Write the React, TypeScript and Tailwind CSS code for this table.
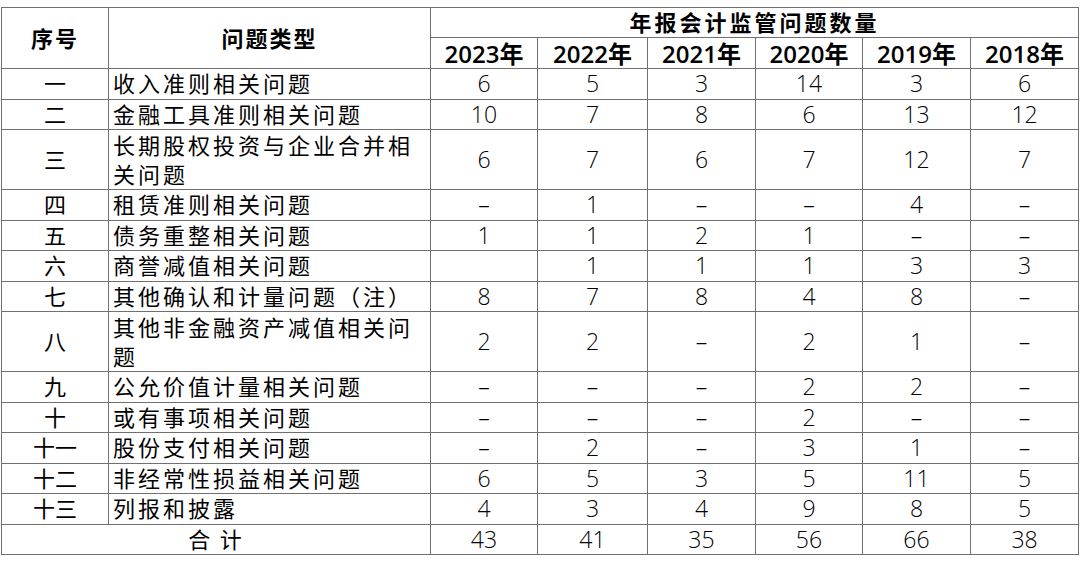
const years = ['2023年', '2022年', '2021年', '2020年', '2019年', '2018年']

const rows: { no: string; name: string; vals: string[]; tall?: boolean }[] = [
  { no: '一', name: '收入准则相关问题', vals: ['6', '5', '3', '14', '3', '6'] },
  { no: '二', name: '金融工具准则相关问题', vals: ['10', '7', '8', '6', '13', '12'] },
  { no: '三', name: '长期股权投资与企业合并相关问题', vals: ['6', '7', '6', '7', '12', '7'], tall: true },
  { no: '四', name: '租赁准则相关问题', vals: ['–', '1', '–', '–', '4', '–'] },
  { no: '五', name: '债务重整相关问题', vals: ['1', '1', '2', '1', '–', '–'] },
  { no: '六', name: '商誉减值相关问题', vals: ['', '1', '1', '1', '3', '3'] },
  { no: '七', name: '其他确认和计量问题（注）', vals: ['8', '7', '8', '4', '8', '–'] },
  { no: '八', name: '其他非金融资产减值相关问题', vals: ['2', '2', '–', '2', '1', '–'], tall: true },
  { no: '九', name: '公允价值计量相关问题', vals: ['–', '–', '–', '2', '2', '–'] },
  { no: '十', name: '或有事项相关问题', vals: ['–', '–', '–', '2', '–', '–'] },
  { no: '十一', name: '股份支付相关问题', vals: ['–', '2', '–', '3', '1', '–'] },
  { no: '十二', name: '非经常性损益相关问题', vals: ['6', '5', '3', '5', '11', '5'] },
  { no: '十三', name: '列报和披露', vals: ['4', '3', '4', '9', '8', '5'] },
]

const totals = ['43', '41', '35', '56', '66', '38']

const cell = 'border border-[#707070] p-0 text-center align-middle'
const num = `${cell} text-[23px] font-light`

export default function App() {
  return (
    <div className="w-[1080px] h-[569px] bg-white pt-[7px] pl-[1px] text-black font-['Open_Sans','Noto_Sans_CJK_SC',sans-serif]">
      <table className="table-fixed border-collapse w-[1077px] text-[22px] leading-[29px]">
        <colgroup>
          <col className="w-[107px]" />
          <col className="w-[322px]" />
          <col className="w-[107px]" />
          <col className="w-[110px]" />
          <col className="w-[108px]" />
          <col className="w-[107px]" />
          <col className="w-[108px]" />
          <col className="w-[108px]" />
        </colgroup>
        <thead className="font-bold">
          <tr className="h-[30px]">
            <th rowSpan={2} className={`${cell} tracking-[2px]`}>序号</th>
            <th rowSpan={2} className={`${cell} tracking-[2px]`}>问题类型</th>
            <th colSpan={6} className={`${cell} tracking-[3px]`}>年报会计监管问题数量</th>
          </tr>
          <tr className="h-[31px]">
            {years.map((y) => (
              <th key={y} className={`${cell} text-[24px] font-semibold`}>{y}</th>
            ))}
          </tr>
        </thead>
        <tbody>
          {rows.map((r) => (
            <tr key={r.no} className={r.tall ? 'h-[60px]' : 'h-[30.5px]'}>
              <td className={cell}>{r.no}</td>
              <td className={`${cell} text-left pl-[4px] tracking-[3px]`}>{r.name}</td>
              {r.vals.map((v, i) => (
                <td key={i} className={num}>{v}</td>
              ))}
            </tr>
          ))}
          <tr className="h-[30.5px]">
            <td colSpan={2} className={`${cell} tracking-[2px]`}>合 计</td>
            {totals.map((v, i) => (
              <td key={i} className={num}>{v}</td>
            ))}
          </tr>
        </tbody>
      </table>
    </div>
  )
}
